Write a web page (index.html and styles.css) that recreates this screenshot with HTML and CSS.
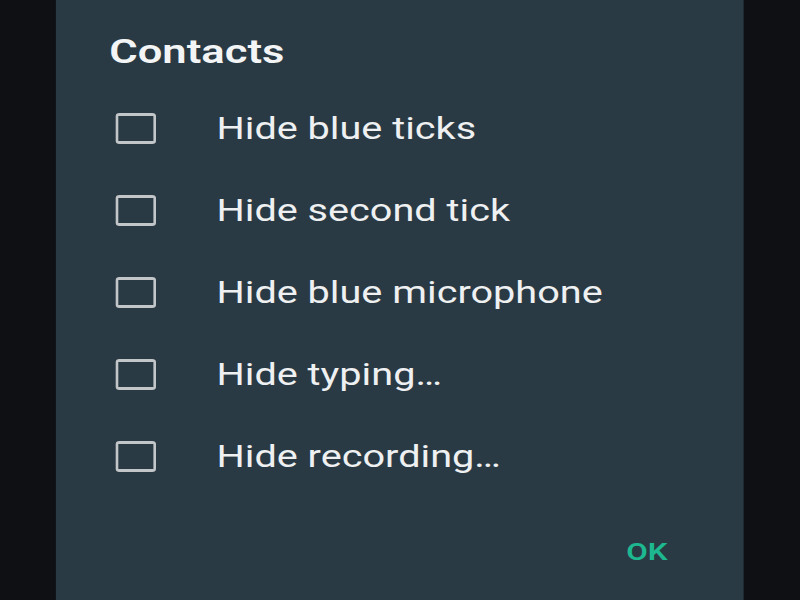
FILE: index.html
```html
<!DOCTYPE html>
<html>
<head>
<meta charset="utf-8">
<link rel="stylesheet" href="styles.css">
</head>
<body>
<div class="stage">
  <div class="dialog">
    <h1 class="title">Contacts</h1>
    <ul class="options">
      <li class="option"><span class="box"></span><span class="label">Hide blue ticks</span></li>
      <li class="option"><span class="box"></span><span class="label">Hide second tick</span></li>
      <li class="option"><span class="box"></span><span class="label">Hide blue microphone</span></li>
      <li class="option"><span class="box"></span><span class="label">Hide typing…</span></li>
      <li class="option"><span class="box"></span><span class="label">Hide recording…</span></li>
    </ul>
    <div class="actions"><span class="ok">OK</span></div>
  </div>
</div>
</body>
</html>
```

FILE: styles.css
```css
html, body {
  margin: 0;
  padding: 0;
  background: #0f1013;
  overflow: hidden;
  width: 800px;
  height: 600px;
}
.stage {
  width: 615.4px;
  height: 600px;
  display: flex;
  padding-left: 43px;
  box-sizing: border-box;
  transform: scaleX(1.3);
  transform-origin: 0 0;
  font-family: Roboto, "Noto Sans", sans-serif;
}
.dialog {
  width: 529px;
  height: 600px;
  background: #2a3a44;
  box-sizing: border-box;
  padding-top: 32px;
  display: flex;
  flex-direction: column;
}
.title {
  margin: 0;
  padding-left: 41px;
  font-size: 33.5px;
  line-height: 40px;
  font-weight: 600;
  color: #f2f4f5;
}
.options {
  list-style: none;
  margin: 15.5px 0 0;
  padding: 0 0 0 45.5px;
  display: flex;
  flex-direction: column;
}
.option {
  height: 82px;
  display: flex;
  align-items: center;
  gap: 46.5px;
}
.box {
  width: 31.5px;
  height: 31px;
  box-sizing: border-box;
  border-style: solid;
  border-width: 3px 2.6px;
  border-color: #c2c6c9;
  border-radius: 3px;
  flex: none;
}
.label {
  font-size: 30.5px;
  line-height: 36px;
  color: #eef0f1;
  font-weight: 400;
}
.actions {
  margin-top: 30px;
  height: 48px;
  display: flex;
  justify-content: flex-end;
  align-items: center;
  padding-right: 58.5px;
}
.ok {
  font-size: 24px;
  line-height: 28px;
  font-weight: 600;
  color: #1db88f;
}
```
